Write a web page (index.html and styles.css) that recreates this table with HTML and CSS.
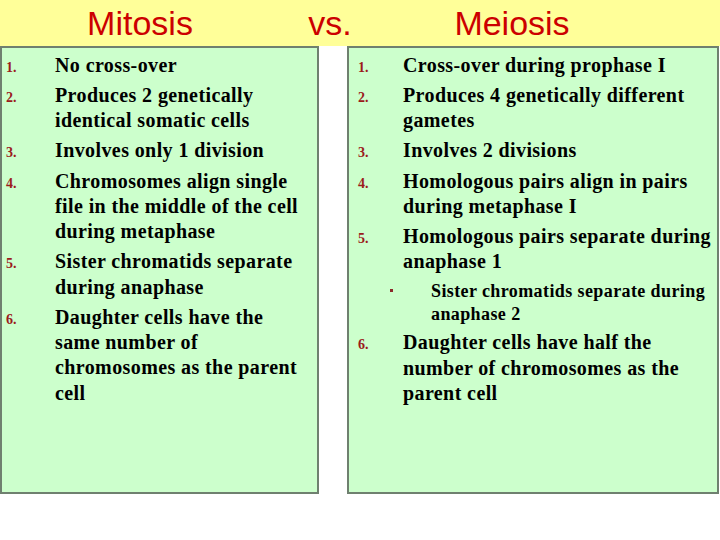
FILE: index.html
```html
<!DOCTYPE html>
<html>
<head>
<meta charset="utf-8">
<link rel="stylesheet" href="styles.css">
</head>
<body>
<header class="titles">
  <h1 class="title t-left">Mitosis</h1>
  <h1 class="title t-mid">vs.</h1>
  <h1 class="title t-right">Meiosis</h1>
</header>
<main class="cols">
  <section class="box box-left">
    <ol class="list">
      <li class="item"><span class="num">1.</span><span class="txt">No cross-over</span></li>
      <li class="item"><span class="num">2.</span><span class="txt">Produces 2 genetically identical somatic cells</span></li>
      <li class="item"><span class="num">3.</span><span class="txt">Involves only 1 division</span></li>
      <li class="item"><span class="num">4.</span><span class="txt">Chromosomes align single file in the middle of the cell during metaphase</span></li>
      <li class="item"><span class="num">5.</span><span class="txt">Sister chromatids separate during anaphase</span></li>
      <li class="item"><span class="num">6.</span><span class="txt">Daughter cells have the same number of chromosomes as the parent cell</span></li>
    </ol>
  </section>
  <section class="box box-right">
    <ol class="list">
      <li class="item"><span class="num">1.</span><span class="txt">Cross-over during prophase I</span></li>
      <li class="item"><span class="num">2.</span><span class="txt">Produces 4 genetically different gametes</span></li>
      <li class="item"><span class="num">3.</span><span class="txt">Involves 2 divisions</span></li>
      <li class="item"><span class="num">4.</span><span class="txt">Homologous pairs align in pairs during metaphase I</span></li>
      <li class="item"><span class="num">5.</span><span class="txt">Homologous pairs separate during anaphase 1</span></li>
      <li class="sub"><span class="dot"></span><span class="subtxt">Sister chromatids separate during anaphase 2</span></li>
      <li class="item"><span class="num">6.</span><span class="txt">Daughter cells have half the number of chromosomes as the parent cell</span></li>
    </ol>
  </section>
</main>
</body>
</html>
```

FILE: styles.css
```css
html, body {
  margin: 0;
  padding: 0;
  background: #ffffff;
}
body {
  width: 720px;
  height: 540px;
  overflow: hidden;
}
.titles {
  display: grid;
  grid-template-columns: 280px 100px 264px 76px;
  height: 46px;
  background: #ffff99;
}
.title {
  margin: 0;
  font-family: "Liberation Sans", Arial, sans-serif;
  font-weight: normal;
  font-size: 34px;
  line-height: 46px;
  color: #cc0000;
  text-align: center;
}
.cols {
  display: flex;
  gap: 28px;
  height: 448px;
}
.box {
  box-sizing: border-box;
  height: 448px;
  background: #ccffcc;
  border: 2px solid #6f806f;
  padding-top: 5px;
}
.box-left {
  width: 319px;
  padding-left: 4px;
  padding-right: 8px;
}
.box-right {
  width: 372px;
  padding-left: 9px;
  padding-right: 2px;
}
.list {
  list-style: none;
  margin: 0;
  padding: 0;
  font-family: "Liberation Serif", "Times New Roman", serif;
  font-weight: bold;
  color: #000;
}
.item {
  display: grid;
  grid-template-columns: 49px 1fr;
  align-items: baseline;
  margin-top: 4.8px;
  font-size: 20px;
  line-height: 25.3px;
  letter-spacing: 0.4px;
}
.item:first-child {
  margin-top: 0;
}
.box-right .item {
  grid-template-columns: 45px 1fr;
}
.num {
  font-size: 14px;
  line-height: 14px;
  letter-spacing: 0;
  color: #9b1c1c;
}
.sub {
  display: grid;
  grid-template-columns: 32px 41px 1fr;
  align-items: start;
  margin-top: 5px;
  font-size: 18px;
  line-height: 23px;
  letter-spacing: 0.4px;
}
.dot {
  grid-column: 2;
  margin-top: 9px;
  width: 3px;
  height: 3px;
  background: #8b2a2a;
}
.subtxt {
  grid-column: 3;
}
```
